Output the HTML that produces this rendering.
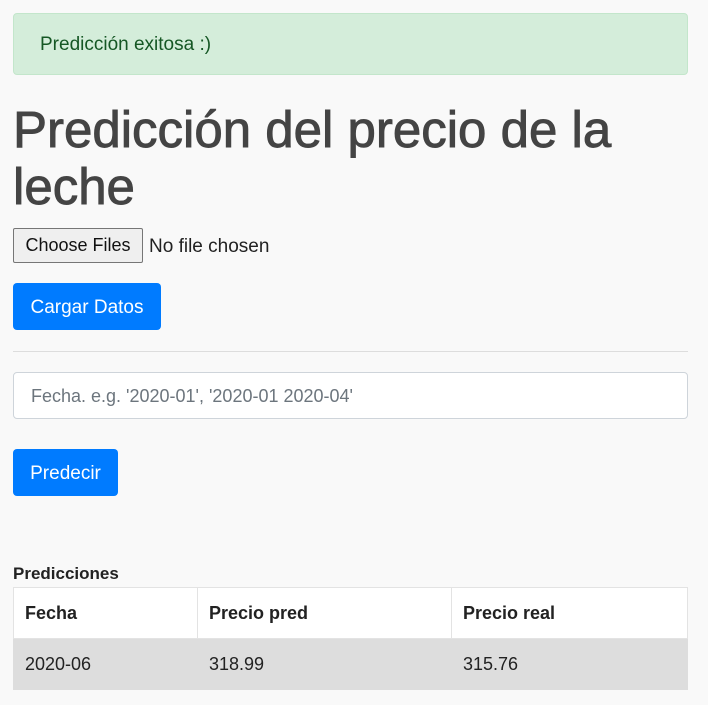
<!DOCTYPE html>
<html><head><meta charset="utf-8"><style>
body{margin:0;width:708px;height:705px;background:#f9f9f9;font-family:"Liberation Sans",sans-serif;position:relative;overflow:hidden}
.a{position:absolute}
.alert{left:13px;top:13px;width:673px;height:60px;background:#d4edda;border:1px solid #c3e6cb;border-radius:4px;color:#155724;font-size:19px;line-height:62px;box-sizing:content-box}
.alert span{margin-left:26px}
h1{position:absolute;left:13px;top:101px;margin:0;font-size:51px;font-weight:normal;-webkit-text-stroke:0.9px #444;line-height:57px;color:#444;width:690px}
.file{left:13px;top:228px;width:128px;height:33px;background:#efefef;border:1px solid #767676;border-radius:2px;font-size:18px;line-height:33px;text-align:center;color:#111}
.nf{left:149px;top:228px;font-size:19px;line-height:37px;color:#222}
.btn{background:#007bff;color:#fff;border-radius:4px;font-size:19px;text-align:center}
.hr{left:13px;top:351px;width:675px;height:1px;background:#ddd}
.inp{left:13px;top:372px;width:673px;height:45px;background:#fff;border:1px solid #ced4da;border-radius:4px;font-size:18px;line-height:47px;color:#6c757d}
table{position:absolute;left:13px;top:587px;width:675px;border-collapse:collapse;font-size:18px;color:#222}
td,th{border:1px solid #e3e3e3;height:50px;padding:0 0 0 11px;text-align:left}
th{background:#fff;font-weight:bold}
tr.b td{background:#dddddd;border-color:#dddddd}
</style></head><body>
<div class="a alert"><span>Predicción exitosa :)</span></div>
<h1>Predicción del precio de la leche</h1>
<div class="a file">Choose Files</div>
<div class="a nf">No file chosen</div>
<div class="a btn" style="left:13px;top:283px;width:148px;height:47px;line-height:50px">Cargar Datos</div>
<div class="a hr"></div>
<div class="a inp"><span style="margin-left:17px">Fecha. e.g. '2020-01', '2020-01 2020-04'</span></div>
<div class="a btn" style="left:13px;top:449px;width:105px;height:47px;line-height:50px">Predecir</div>
<div class="a" style="left:13px;top:564px;font-size:17px;font-weight:bold;color:#222">Predicciones</div>
<table><tr><th style="width:172px">Fecha</th><th style="width:242px">Precio pred</th><th>Precio real</th></tr>
<tr class="b"><td>2020-06</td><td>318.99</td><td>315.76</td></tr></table>
</body></html>
